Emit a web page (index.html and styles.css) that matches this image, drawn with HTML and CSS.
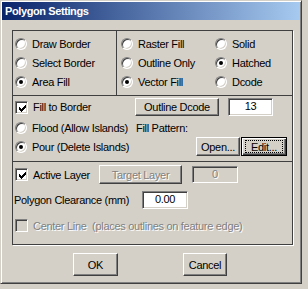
FILE: index.html
```html
<!DOCTYPE html>
<html lang="en">
<head>
  <meta charset="UTF-8" />
  <title>Polygon Settings</title>
  <link rel="stylesheet" href="styles.css">
</head>
<body>

  <div class="window">
    <div class="titlebar">Polygon Settings</div>

    <div class="client">
      <div class="group">

        <!-- Mode / fill type / pattern -->
        <div class="sec sec-mode">
          <div class="col col-border">
            <label class="opt"><span class="radio"></span>Draw Border</label>
            <label class="opt"><span class="radio"></span>Select Border</label>
            <label class="opt"><span class="radio on"></span>Area Fill</label>
          </div>
          <div class="col col-fill">
            <label class="opt"><span class="radio"></span>Raster Fill</label>
            <label class="opt"><span class="radio"></span>Outline Only</label>
            <label class="opt"><span class="radio on"></span>Vector Fill</label>
          </div>
          <div class="col col-style">
            <label class="opt"><span class="radio"></span>Solid</label>
            <label class="opt"><span class="radio on"></span>Hatched</label>
            <label class="opt"><span class="radio"></span>Dcode</label>
          </div>
        </div>

        <!-- Fill options -->
        <div class="sec sec-fill">
          <div class="row row-dcode">
            <label class="opt lbl-dcode">
              <span class="check"><svg viewBox="2 2 9 9" width="9" height="9"><path d="M3 5V8H4V9H5V10H6V9H7V8H8V7H9V6H10V3H9V4H8V5H7V6H6V7H5V6H4V5Z"/></svg></span>Fill to Border
            </label>
            <button class="btn btn-dcode">Outline Dcode</button>
            <div class="field field-dcode">13</div>
          </div>
          <div class="row row-flood">
            <label class="opt lbl-flood"><span class="radio"></span>Flood (Allow Islands)</label>
            <span class="caption">Fill Pattern:</span>
          </div>
          <div class="row row-pour">
            <label class="opt lbl-pour"><span class="radio on"></span>Pour (Delete Islands)</label>
            <button class="btn btn-open">Open...</button>
            <button class="btn btn-edit"><span class="focus">Edit...</span></button>
          </div>
        </div>

        <!-- Layer / clearance -->
        <div class="sec sec-layer">
          <div class="row row-layer">
            <label class="opt lbl-layer">
              <span class="check"><svg viewBox="2 2 9 9" width="9" height="9"><path d="M3 5V8H4V9H5V10H6V9H7V8H8V7H9V6H10V3H9V4H8V5H7V6H6V7H5V6H4V5Z"/></svg></span>Active Layer
            </label>
            <button class="btn btn-target disabled">Target Layer</button>
            <div class="field field-target disabled">0</div>
          </div>
          <div class="row row-clear">
            <span class="caption lbl-clear">Polygon Clearance (mm)</span>
            <div class="field field-clear">0.00</div>
          </div>
          <div class="row row-center">
            <label class="opt disabled"><span class="check off"></span>Center Line&nbsp; (places outlines on feature edge)</label>
          </div>
        </div>

      </div>

      <div class="actions">
        <button class="btn btn-ok">OK</button>
        <button class="btn btn-cancel">Cancel</button>
      </div>
    </div>
  </div>

</body>
</html>
```

FILE: styles.css
```css
body {
  margin: 0;
  background: #d4d0c8;
  font-family: 'Liberation Sans', Arial, sans-serif;
  font-size: 11px;
  letter-spacing: -0.3px;
  color: #000;
}

.window {
  width: 302px;
  height: 284px;
  box-sizing: border-box;
  padding: 1px;
  background: #d4d0c8;
  border: 1px solid;
  border-color: #d4d0c8 #404040 #404040 #d4d0c8;
  box-shadow: inset 1px 1px #fff, inset -1px -1px #808080;
}

.titlebar {
  height: 18px;
  line-height: 18px;
  padding-left: 3px;
  background: linear-gradient(to right, #0a246a, #a6caf0);
  color: #fff;
  font-weight: bold;
  letter-spacing: -0.4px;
}

.client {
  padding: 10px 0 0 10px;
}

.group {
  width: 281px;
  height: 215px;
  box-sizing: border-box;
  border: 1px solid #404040;
  box-shadow: 1px 1px 0 #fff;
}

.sec {
  border-bottom: 1px solid #404040;
}

.sec-mode {
  height: 64px;
  display: flex;
}

.sec-fill {
  height: 63px;
  padding-left: 2px;
}

.sec-layer {
  height: 84px;
  border-bottom: none;
  padding-left: 2px;
}

.col {
  padding-top: 3px;
  display: flex;
  flex-direction: column;
}

.col-border {
  width: 101px;
  padding-left: 2px;
  border-right: 1px solid #404040;
}

.col-fill {
  width: 94px;
  padding-left: 4px;
}

.opt {
  height: 19px;
  display: flex;
  align-items: center;
  gap: 5px;
  white-space: nowrap;
}

.radio {
  width: 12px;
  height: 12px;
  box-sizing: border-box;
  flex: none;
  border-radius: 50%;
  background: #fff;
  border: 1px solid;
  border-color: #808080 #fff #fff #808080;
  box-shadow: inset 1px 1px #404040, inset -1px -1px #d4d0c8;
  display: flex;
  align-items: center;
  justify-content: center;
}

.radio.on::after {
  content: "";
  width: 4px;
  height: 4px;
  border-radius: 50%;
  background: #000;
}

.check {
  width: 13px;
  height: 13px;
  box-sizing: border-box;
  flex: none;
  padding: 2px;
  background: #fff;
  border: 1px solid;
  border-color: #808080 #fff #fff #808080;
  box-shadow: inset 1px 1px #404040, inset -1px -1px #d4d0c8;
}

.check svg {
  display: block;
  fill: #000;
  shape-rendering: crispEdges;
}

.check.off {
  background: #d4d0c8;
}

.row {
  display: flex;
  align-items: center;
}

.row-dcode {
  margin-top: 2px;
  height: 18px;
}

.row-flood {
  margin-top: 3px;
  height: 18px;
}

.row-pour {
  height: 19px;
}

.lbl-dcode { width: 120px; }
.lbl-flood { width: 121px; }
.lbl-pour { width: 181px; }
.lbl-layer { width: 84px; }

.btn {
  height: 100%;
  box-sizing: border-box;
  padding: 0;
  font: inherit;
  letter-spacing: inherit;
  color: #000;
  background: #d4d0c8;
  border: 1px solid;
  border-color: #fff #404040 #404040 #fff;
  box-shadow: inset -1px -1px #808080, inset 1px 1px #d4d0c8;
}

.btn-dcode {
  width: 84px;
  margin-right: 9px;
}

.btn-open {
  width: 44px;
  margin-right: 1px;
}

.btn-edit {
  width: 46px;
  border: 1px solid #000;
  box-shadow: inset 1px 1px #fff, inset -1px -1px #404040, inset -2px -2px #808080;
  display: flex;
  align-items: center;
  justify-content: center;
}

.focus {
  width: 38px;
  height: 13px;
  box-sizing: border-box;
  border: 1px dotted #000;
  display: flex;
  align-items: center;
  justify-content: center;
}

.field {
  box-sizing: border-box;
  background: #fff;
  text-align: center;
  line-height: 15px;
  border: 1px solid;
  border-color: #808080 #fff #fff #808080;
  box-shadow: inset 1px 1px #404040, inset -1px -1px #d4d0c8;
}

.field-dcode {
  width: 45px;
  height: 18px;
}

.row-layer {
  margin-top: 3px;
  height: 19px;
}

.btn-target {
  width: 83px;
  margin-right: 10px;
}

.field-target {
  width: 46px;
  height: 17px;
  background: #d4d0c8;
}

.disabled {
  color: #808080;
  text-shadow: 1px 1px 0 #fff;
}

.row-clear {
  margin-top: 7px;
  height: 18px;
  padding-left: 1px;
  margin-left: -2px;
}

.lbl-clear {
  width: 128px;
}

.field-clear {
  width: 46px;
  height: 18px;
}

.row-center {
  margin-top: 10px;
  height: 13px;
}

.actions {
  margin-top: 8px;
  display: flex;
  gap: 65px;
  padding-left: 61px;
}

.btn-ok,
.btn-cancel {
  height: 23px;
}

.btn-ok { width: 45px; }
.btn-cancel { width: 44px; }
```
